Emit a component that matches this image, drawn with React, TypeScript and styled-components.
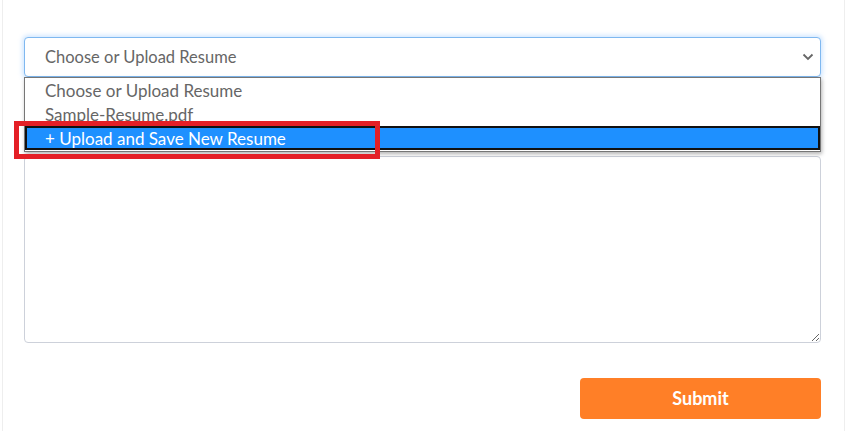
import React, { useState } from "react";
import styled, { createGlobalStyle } from "styled-components";

const GlobalStyle = createGlobalStyle`
  html, body {
    margin: 0;
    padding: 0;
    background: #ffffff;
  }
  body {
    font-family: Lato, "Open Sans", sans-serif;
  }
`;

const Page = styled.div`
  margin-left: 2px;
  width: 843px;
  min-height: 431px;
  box-sizing: border-box;
  border-left: 1px solid #eeeeee;
  border-right: 1px solid #eeeeee;
  padding: 37px 23px 0 21px;
`;

const Form = styled.form`
  display: flex;
  flex-direction: column;
`;

const SelectWrap = styled.div`
  position: relative;
`;

const SelectBox = styled.div`
  height: 40px;
  box-sizing: border-box;
  display: flex;
  align-items: center;
  justify-content: space-between;
  padding: 0 6px 0 20px;
  border: 1px solid #7fb8f0;
  border-radius: 4px;
  box-shadow: 0 0 4px 2px rgba(128, 189, 255, 0.35);
  background: #fff;
  color: #666;
  font-size: 16.5px;
  cursor: pointer;
`;

const List = styled.ul`
  position: absolute;
  top: 40px;
  left: 0;
  width: 797px;
  margin: 0;
  padding: 0 0 1px;
  list-style: none;
  box-sizing: border-box;
  background: #fff;
  border: 1px solid #767676;
  box-shadow: 1px 2px 4px rgba(0, 0, 0, 0.3);
  z-index: 2;
`;

const Option = styled.li<{ $active?: boolean }>`
  height: 24px;
  box-sizing: border-box;
  display: flex;
  align-items: center;
  padding-left: ${(p) => (p.$active ? "18px" : "20px")};
  font-size: 17px;
  color: ${(p) => (p.$active ? "#fff" : "#666")};
  background: ${(p) => (p.$active ? "#1e90ff" : "transparent")};
  border: ${(p) => (p.$active ? "2px solid #111" : "none")};
`;

const Highlight = styled.div`
  position: absolute;
  left: -10px;
  top: 84px;
  width: 366px;
  height: 38px;
  box-sizing: border-box;
  border: 5px solid #e41f26;
  pointer-events: none;
  z-index: 3;
`;

const Message = styled.textarea`
  margin-top: 79px;
  height: 187px;
  box-sizing: border-box;
  border: 1px solid #cdd1da;
  border-radius: 4px;
  padding: 10px 20px;
  font-family: inherit;
  font-size: 16px;
  color: #666;
  resize: vertical;
  outline: none;
`;

const Actions = styled.div`
  display: flex;
  justify-content: flex-end;
  margin-top: 35px;
`;

const SubmitButton = styled.button`
  width: 241px;
  height: 41px;
  padding: 0 0 2px;
  border: 0;
  border-radius: 4px;
  background: #ff7f27;
  color: #fff;
  font-family: inherit;
  font-size: 18px;
  font-weight: 700;
  cursor: pointer;
`;

const Chevron = () => (
  <svg width="12" height="8" viewBox="0 0 12 8" fill="none">
    <path d="M1.5 1.5L6 6l4.5-4.5" stroke="#666" strokeWidth="1.8" />
  </svg>
);

const options = [
  "Choose or Upload Resume",
  "Sample-Resume.pdf",
  "+ Upload and Save New Resume",
];

const App = () => {
  const [active] = useState(2);

  return (
    <>
      <GlobalStyle />
      <Page>
        <Form onSubmit={(e) => e.preventDefault()}>
          <SelectWrap>
            <SelectBox>
              <span>Choose or Upload Resume</span>
              <Chevron />
            </SelectBox>
            <List>
              {options.map((o, i) => (
                <Option key={o} $active={i === active}>
                  {o}
                </Option>
              ))}
            </List>
            <Highlight />
          </SelectWrap>
          <Message />
          <Actions>
            <SubmitButton type="submit">Submit</SubmitButton>
          </Actions>
        </Form>
      </Page>
    </>
  );
};

export default App;
